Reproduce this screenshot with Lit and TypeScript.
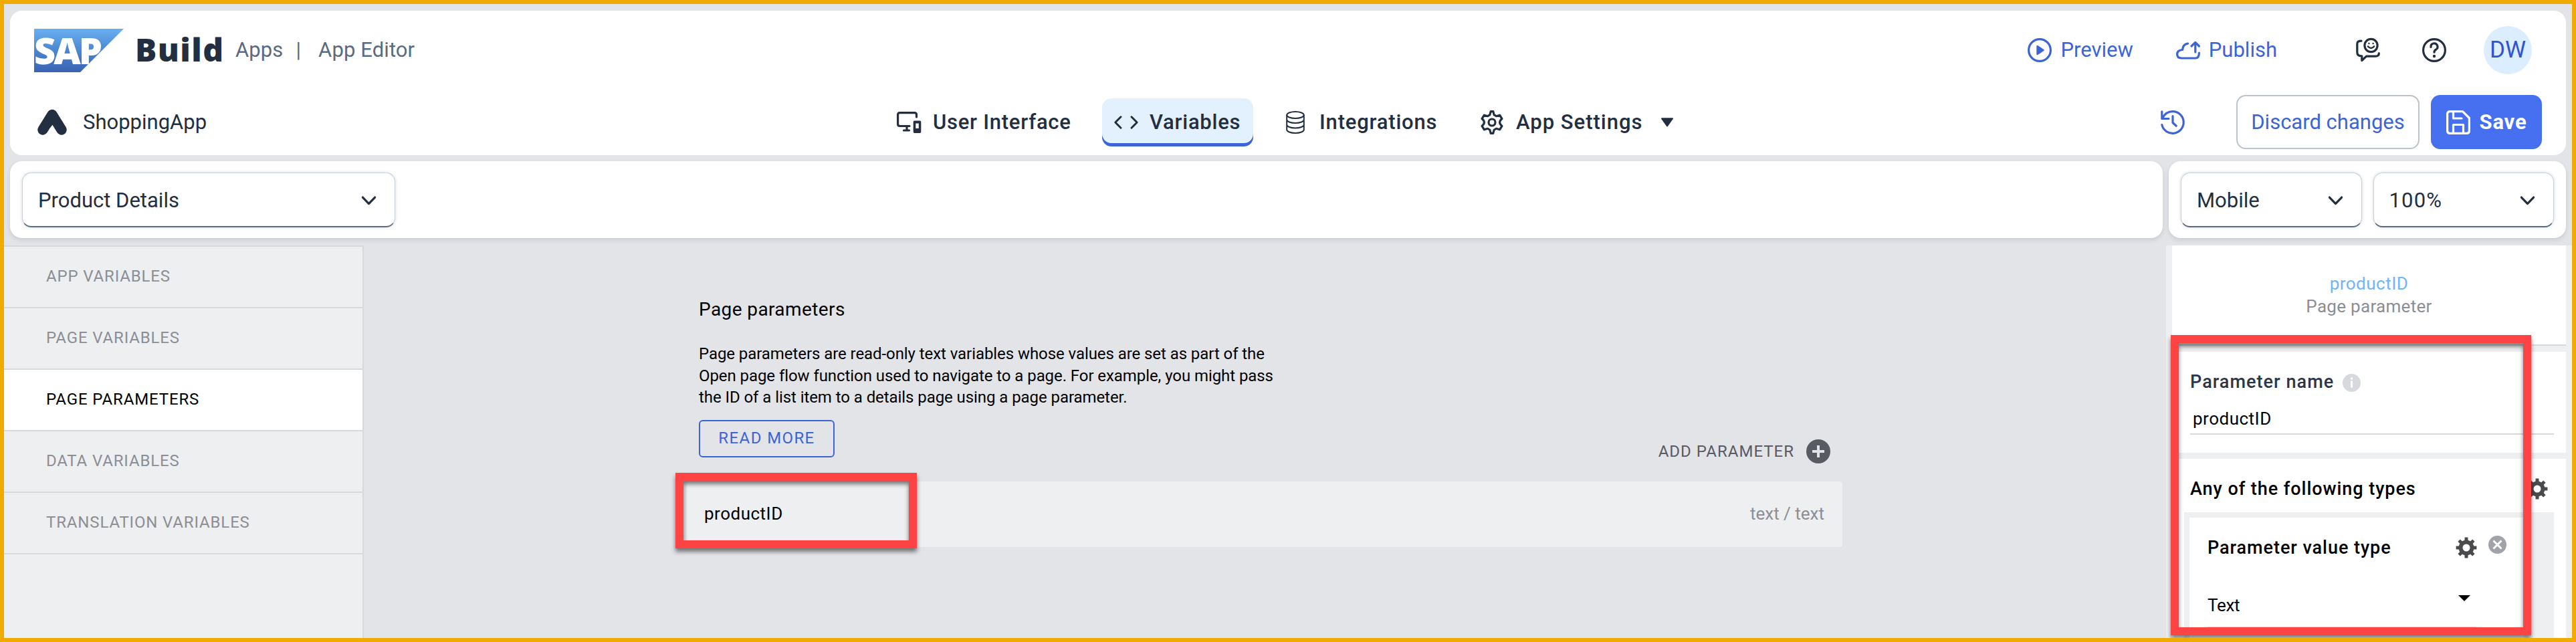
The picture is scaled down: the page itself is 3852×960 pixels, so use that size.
import { LitElement, html, css, svg, nothing } from "lit";
import { customElement, property } from "lit/decorators.js";
import { classMap } from "lit/directives/class-map.js";

const gearPath = (teeth: number, cx: number, cy: number, inner: number, outer: number) => {
  const step = (Math.PI * 2) / teeth;
  const at = (r: number, a: number) => `${(cx + r * Math.sin(a)).toFixed(2)} ${(cy - r * Math.cos(a)).toFixed(2)}`;
  const pts: string[] = [];
  for (let i = 0; i < teeth; i++) {
    const a = i * step;
    pts.push(at(inner, a - step * 0.28), at(outer, a - step * 0.2), at(outer, a + step * 0.2), at(inner, a + step * 0.28));
  }
  return `M${pts.join("L")}Z`;
};

const icons: Record<string, { box: string; body: unknown }> = {
  logo: {
    box: "0 0 134 65",
    body: svg`<defs><linearGradient id="g" x1="0" y1="0" x2="0" y2="1"><stop offset="0" stop-color="#69b0f1"/><stop offset=".5" stop-color="#4c86cf"/><stop offset="1" stop-color="#3a63b3"/></linearGradient></defs>
      <path d="M0 0H134L69 65H0Z" fill="url(#g)"/>
      <text x="0" y="52.500" textLength="99" lengthAdjust="spacingAndGlyphs" font-family="Noto Sans, sans-serif" font-weight="900" font-size="55" letter-spacing="-3" fill="#fff">SAP</text>`,
  },
  app: {
    box: "0 0 44 38",
    body: svg`<path d="M8 30 22 7.500 36 30" fill="none" stroke="currentColor" stroke-width="15.500" stroke-linecap="round" stroke-linejoin="round"/><path d="M19 12 27 12 25.500 19 19 27Z" fill="currentColor"/>`,
  },
  devices: {
    box: "0 0 36 32",
    body: svg`<g fill="none" stroke="currentColor" stroke-width="3.200" stroke-linecap="round" stroke-linejoin="round"><path d="M29.500 8V4.500Q29.500 1.600 26.500 1.600H4.600Q1.600 1.600 1.600 4.500V18.500Q1.600 21.500 4.600 21.500H19"/><path d="M15 22V28M10.500 28H18.500"/></g><path fill-rule="evenodd" d="M26.500 13.500h8a1.800 1.800 0 0 1 1.800 1.800v15a1.800 1.800 0 0 1-1.800 1.800h-8a1.800 1.800 0 0 1-1.800-1.800v-15a1.800 1.800 0 0 1 1.800-1.800ZM28.300 17.500v7.500h4.500v-7.500Z" fill="currentColor"/>`,
  },
  code: {
    box: "0 0 36 20",
    body: svg`<path d="M10 1.800 1.800 10 10 18.200M26 1.800 34.200 10 26 18.200" fill="none" stroke="currentColor" stroke-width="3" stroke-linecap="round" stroke-linejoin="round"/>`,
  },
  database: {
    box: "0 0 28 34",
    body: svg`<g fill="none" stroke="currentColor" stroke-width="2"><ellipse cx="14" cy="6" rx="12.800" ry="5"/><path d="M1.200 6V28C1.200 30.800 6.900 33 14 33S26.800 30.800 26.800 28V6M1.200 13C1.200 15.800 6.900 18 14 18S26.800 15.800 26.800 13M1.200 20.500C1.200 23.300 6.900 25.500 14 25.500S26.800 23.300 26.800 20.500"/></g>`,
  },
  settings: {
    box: "0 0 34 36",
    body: svg`<g fill="none" stroke="currentColor" stroke-width="3.200" stroke-linejoin="round"><path d="M15.200 1.700h3.600l1.400 5.200q1.600.7 3.200 1.800l5.200-1.500 3.400 5.400q-3.400 2.700-3.400 5.400t3.400 5.400l-3.400 5.400-5.200-1.500q-1.600 1.100-3.200 1.800l-1.400 5.200h-3.600l-1.400-5.200q-1.600-.7-3.200-1.800l-5.200 1.500-3.400-5.400q3.400-2.700 3.400-5.400t-3.400-5.400l3.400-5.400 5.200 1.500q1.600-1.100 3.200-1.800Z"/><circle cx="17" cy="18" r="5"/></g>`,
  },
  triangle: {
    box: "0 0 20 14",
    body: svg`<path d="M2 1.200H18L10 12.500Z" fill="currentColor" stroke="currentColor" stroke-width="2" stroke-linejoin="round"/>`,
  },
  play: {
    box: "0 0 36 36",
    body: svg`<circle cx="18" cy="18" r="16.400" fill="none" stroke="currentColor" stroke-width="3.200"/><path d="M14.500 12 23.500 18 14.500 24Z" fill="currentColor" stroke="currentColor" stroke-width="2.400" stroke-linejoin="round"/>`,
  },
  cloud: {
    box: "0 0 36 28",
    body: svg`<g fill="none" stroke="currentColor" stroke-width="3.200" stroke-linecap="round" stroke-linejoin="round"><path d="M17.500 4.200Q10.500 5 9.500 13.500Q1.600 14 1.600 20T8 26H29Q34.400 26 34.400 18"/><path d="M28.800 17V3M23 8 28.800 2.400 34.400 8"/></g>`,
  },
  feedback: {
    box: "0 0 36 36",
    body: svg`<g fill="none" stroke="currentColor" stroke-width="3.200" stroke-linecap="round" stroke-linejoin="round"><path d="M8 4.200Q1.800 4.200 1.800 8.500V21.500Q1.800 26.800 8.800 26.800V33.500L15.500 27.200H29.500Q34.300 27.200 34.300 22.500"/><circle cx="22.500" cy="11" r="9.600"/></g><path d="M18 12.500Q22.500 17.500 27 12.500" fill="none" stroke="currentColor" stroke-width="2.600" stroke-linecap="round"/><circle cx="19.400" cy="8" r="1.200" fill="currentColor"/><circle cx="25.600" cy="8" r="1.200" fill="currentColor"/>`,
  },
  help: {
    box: "0 0 36 36",
    body: svg`<g fill="none" stroke="currentColor" stroke-width="3.200" stroke-linecap="round"><circle cx="18" cy="18" r="16.400"/><path d="M13 13.500A5 5 0 1 1 20.800 17Q18 18.500 18 21.200"/></g><circle cx="18" cy="27" r="2.200" fill="currentColor"/>`,
  },
  history: {
    box: "0 0 36 36",
    body: svg`<g fill="none" stroke="currentColor" stroke-width="3.200" stroke-linecap="round" stroke-linejoin="round"><path d="M1.800 1.800V12.500H12M2.500 12Q7.500 1.600 18 1.600A16.400 16.400 0 1 1 1.800 21.500"/><path d="M18 8.500V18.500L23.200 23.200"/></g>`,
  },
  save: {
    box: "0 0 36 36",
    body: svg`<g fill="none" stroke="currentColor" stroke-width="3.200" stroke-linecap="round" stroke-linejoin="round"><path d="M1.600 5.600Q1.600 1.600 5.600 1.600H24.500L34.400 11.500V30.400Q34.400 34.400 30.400 34.400H5.600Q1.600 34.400 1.600 30.400Z"/><path d="M10.500 2.500V12H23M10.500 34V21.500H25.500V34"/></g>`,
  },
  chevron: {
    box: "0 0 24 15",
    body: svg`<path d="M2.200 2.200 12 12.500 21.800 2.200" fill="none" stroke="currentColor" stroke-width="3.400" stroke-linecap="round" stroke-linejoin="round"/>`,
  },
  plus: {
    box: "0 0 36 36",
    body: svg`<circle cx="18" cy="18" r="18" fill="currentColor"/><path d="M18 9V27M9 18H27" stroke="#e3e4e8" stroke-width="4"/>`,
  },
  info: {
    box: "0 0 27 27",
    body: svg`<circle cx="13.500" cy="13.500" r="13.500" fill="currentColor"/><path d="M13.500 10.500V20.500M13.500 5.500V8.500" stroke="#fff" stroke-width="3"/>`,
  },
  remove: {
    box: "0 0 27 27",
    body: svg`<circle cx="13.500" cy="13.500" r="13.500" fill="currentColor"/><path d="M7.500 7.500 19.500 19.500M19.500 7.500 7.500 19.500" stroke="#fff" stroke-width="3"/>`,
  },
  cog: {
    box: "0 0 32 32",
    body: svg`<path fill="currentColor" fill-rule="evenodd" d="${gearPath(8, 16, 16, 11.6, 15.6)}M16 10.500a5.500 5.500 0 1 0 0 11 5.500 5.500 0 0 0 0-11Z"/>`,
  },
  caret: { box: "0 0 18 9", body: svg`<path d="M0 0H18L9 9Z" fill="currentColor"/>` },
};

@customElement("ui-icon")
class UiIcon extends LitElement {
  @property() name = "";
  static styles = css`
    :host { display: block; flex: none; line-height: 0; }
    svg { display: block; width: 100%; height: 100%; overflow: visible; }
  `;
  render() {
    const icon = icons[this.name];
    return icon ? html`<svg viewBox=${icon.box}>${icon.body}</svg>` : nothing;
  }
}

@customElement("ui-select")
class UiSelect extends LitElement {
  @property() value = "";
  static styles = css`
    :host {
      display: flex; align-items: center; justify-content: space-between; box-sizing: border-box;
      height: 82px; padding: 2px 27px 0 23px; border-radius: 14px; background: #fff;
      border: 1px solid #c9d0d9; border-bottom: 2px solid #5b6b82;
      box-shadow: 0 0 4px rgba(91, 107, 130, 0.28); color: #232f40;
    }
    ui-icon { width: 23px; height: 14px; }
  `;
  render() {
    return html`<span>${this.value}</span><ui-icon name="chevron"></ui-icon>`;
  }
}

const tabs = [
  { label: "User Interface", icon: "devices", cls: "t-ui" },
  { label: "Variables", icon: "code", cls: "t-var" },
  { label: "Integrations", icon: "database", cls: "t-int" },
  { label: "App Settings", icon: "settings", cls: "t-set" },
];
const sections = ["App variables", "Page variables", "Page parameters", "Data variables", "Translation variables"];

@customElement("app-root")
class AppRoot extends LitElement {
  static styles = css`
    :host {
      display: block; position: relative; box-sizing: border-box; width: 3852px; height: 960px; overflow: hidden;
      border: 6px solid #f0ab00; background: #e3e4e8; color: #000;
      font-family: Roboto, "Liberation Sans", sans-serif; font-size: 31px; line-height: 40px; white-space: nowrap;
    }
    .header {
      display: flex; flex-direction: column; box-sizing: border-box; margin: 10px 9px 0; height: 216px;
      border-radius: 18px; background: #fff; color: #232f40;
    }
    .brand { display: flex; align-items: center; height: 118px; box-sizing: border-box; padding: 0 51px 0 36px; }
    .row { display: grid; grid-template-columns: 1326px auto 1fr; align-items: flex-start; height: 98px; }
    .logo { width: 134px; height: 65px; }
    .product { margin: -2px 0 0 17px; width: 150px; font: 900 48px/60px "Noto Sans", Roboto, sans-serif; letter-spacing: 1.4px; }
    .crumb { color: #5b6b82; letter-spacing: 0.1px; }
    .crumb.sep { margin: 0 26px 0 19px; }
    .spacer { flex: 1; }
    .link { display: flex; align-items: center; gap: 13px; color: #3d64d6; letter-spacing: 0; }
    .sq { width: 36px; height: 36px; }
    .cl { width: 36px; height: 28px; }
    .publish { margin: 0 118px 0 64px; }
    .help { margin: 0 56px 0 63px; }
    .avatar {
      width: 72px; height: 72px; border-radius: 50%; background: #dbeeff; color: #3054d3;
      font-size: 35px; line-height: 72px; text-align: center;
    }
    .appname { display: flex; align-items: center; height: 80px; padding: 9px 0 0 41px; gap: 24px; letter-spacing: 0; }
    .mark { width: 44px; height: 38px; }
    .tabs { display: flex; padding-top: 13px; font-weight: 500; letter-spacing: 0.75px; }
    .tab { display: flex; align-items: center; box-sizing: border-box; height: 72px; border-radius: 14px; }
    .t-ui { width: 307px; gap: 18px; }
    .t-var { width: 226px; gap: 17px; padding-left: 18px; background: #e3f1ff; overflow: hidden; box-shadow: inset 0 -5px #3d64d6; }
    .t-int { width: 340px; gap: 22px; padding-left: 49px; letter-spacing: 0.8px; }
    .t-set { gap: 19px; letter-spacing: 1px; }
    .i-devices { width: 36px; height: 32px; }
    .i-code { width: 36px; height: 20px; }
    .i-database { width: 28px; height: 34px; }
    .i-settings { width: 34px; height: 36px; }
    .tri { width: 20px; height: 14px; margin-left: 7px; }
    .actions { display: flex; justify-content: flex-end; align-items: center; height: 81px; padding: 8px 36px 0 0; }
    .history { margin-right: 77px; color: #3d64d6; }
    .btn { display: flex; align-items: center; justify-content: center; box-sizing: border-box; height: 81px; border-radius: 14px; }
    .discard { width: 274px; margin-right: 17px; border: 2px solid #bcc3ca; color: #3d64d6; }
    .savebtn { width: 166px; gap: 14px; background: #4670f0; color: #fff; font-weight: 700; letter-spacing: 0.8px; }
    .bars { display: grid; grid-template-columns: 3219px 594px; gap: 9px; margin: 9px 9px 0; }
    .bar {
      display: flex; gap: 17px; box-sizing: border-box; height: 115px; padding: 17px 18px; border-radius: 18px; background: #fff;
      box-shadow: 0 3px 6px rgba(60, 60, 60, 0.14);
    }
    .page { width: 558px; }
    .small { width: 271px; }
    .zoom { letter-spacing: 1.2px; }
    .body { display: grid; grid-template-columns: 538px 1fr 607px; height: 587px; margin-top: 11px; }
    .side { box-sizing: border-box; border-top: 2px solid #d8d9dc; border-right: 2px solid #d8d9dc; background: #eeeff1; }
    .item {
      box-sizing: border-box; height: 92px; padding-left: 63px; border-bottom: 2px solid #d8d9dc;
      color: #8c8e95; font-size: 24px; line-height: 89px; letter-spacing: 0.85px; text-transform: uppercase;
    }
    .item.on { background: #fff; color: #000; }
    .main { display: flex; flex-direction: column; padding-left: 477px; }
    .title { margin-top: 76px; padding-left: 24px; font-size: 28px; line-height: 40px; letter-spacing: 0.4px; }
    .desc { margin-top: 30px; padding-left: 24px; font-size: 24px; line-height: 32.5px; letter-spacing: -0.07px; }
    .tools { display: flex; flex: none; justify-content: space-between; align-items: flex-start; width: 1716px; height: 92px; margin-top: 17px; }
    .more {
      box-sizing: border-box; width: 203px; height: 56px; margin-left: 24px; border: 2px solid #3d64d6; border-radius: 6px;
      color: #3d64d6; font-size: 24px; line-height: 51px; text-align: center; letter-spacing: 1.4px;
    }
    .add { display: flex; align-items: center; gap: 18px; padding-top: 29px; color: #585b63; font-size: 24px; line-height: 36px; letter-spacing: 1px; }
    .param {
      display: flex; align-items: center; justify-content: space-between; box-sizing: border-box; width: 1728px; height: 98px;
      margin-left: 6px; padding: 0 27px 2px 26px; border-radius: 4px; background: #eeeff1; font-size: 26px; letter-spacing: 0.5px;
    }
    .kind { color: #8c8e95; letter-spacing: 0; }
    .panel { display: flex; flex-direction: column; box-sizing: border-box; overflow: hidden; padding: 0 9px; background: #eeeff1; font-size: 26px; }
    .card { flex: none; box-sizing: border-box; background: #fff; }
    .sum { height: 150px; padding-top: 40px; border-bottom: 2px solid #d8d9dc; text-align: center; line-height: 34px; color: #8c8e95; letter-spacing: 0.3px; }
    .sum .id { color: #6fb4ff; letter-spacing: 0.5px; }
    .name { height: 151px; margin-top: 9px; padding: 25px 18px 0 27px; }
    .label { display: flex; align-items: center; gap: 13px; height: 40px; color: #2b3648; font-size: 27px; font-weight: 500; letter-spacing: 1.05px; }
    .i { width: 27px; height: 27px; color: #d8d9dc; margin-top: 2px; }
    .input { height: 59px; box-sizing: border-box; padding: 15px 0 0 4px; border-bottom: 2px solid #d8d9dc; letter-spacing: 0.5px; }
    .types { height: 280px; margin-top: 9px; padding: 25px 18px 0; }
    .types .label { padding: 0 9px; color: #000; justify-content: space-between; letter-spacing: 0.95px; }
    .cog { width: 32px; height: 32px; color: #4b4b4d; }
    .nest { height: 220px; margin-top: 15px; padding: 8px 44px 0 8px; background: #eeeff1; }
    .value { height: 212px; padding: 25px 27px 0 27px; background: #fff; box-sizing: border-box; }
    .value .label { padding: 0; justify-content: flex-start; gap: 0; }
    .value .cog { margin-left: auto; }
    .x { width: 27px; height: 27px; margin: -9px 0 0 17px; color: #a2a3a9; }
    .pick { display: flex; align-items: center; justify-content: space-between; box-sizing: border-box; width: 402px; height: 100px; padding: 34px 9px 0 0; border-bottom: 2px solid #d8d9dc; letter-spacing: -0.3px; }
    .caret { width: 18px; height: 9px; margin-top: -22px; }
    .mark-box { position: absolute; box-sizing: border-box; border: 12px solid #fd4343; filter: drop-shadow(0 5px 3px rgba(0, 0, 0, 0.5)); }
    .m1 { left: 1004px; top: 701px; width: 361px; height: 113px; }
    .m2 { left: 3240px; top: 495px; width: 539px; height: 449px; }
  `;

  render() {
    return html`
      <header class="header">
        <div class="brand">
          <ui-icon class="logo" name="logo"></ui-icon>
          <span class="product">Build</span>
          <span class="crumb">Apps</span><span class="crumb sep">|</span><span class="crumb">App Editor</span>
          <span class="spacer"></span>
          <a class="link"><ui-icon class="sq" name="play"></ui-icon>Preview</a>
          <a class="link publish"><ui-icon class="cl" name="cloud"></ui-icon>Publish</a>
          <ui-icon class="sq" name="feedback"></ui-icon>
          <ui-icon class="sq help" name="help"></ui-icon>
          <span class="avatar">DW</span>
        </div>
        <div class="row">
          <div class="appname"><ui-icon class="mark" name="app"></ui-icon>ShoppingApp</div>
          <nav class="tabs">
            ${tabs.map(
              (t) => html`<div class="tab ${t.cls}">
                <ui-icon class="i-${t.icon}" name=${t.icon}></ui-icon><span>${t.label}</span>
                ${t.icon === "settings" ? html`<ui-icon class="tri" name="triangle"></ui-icon>` : nothing}
              </div>`,
            )}
          </nav>
          <div class="actions">
            <ui-icon class="sq history" name="history"></ui-icon>
            <div class="btn discard">Discard changes</div>
            <div class="btn savebtn"><ui-icon class="sq" name="save"></ui-icon>Save</div>
          </div>
        </div>
      </header>
      <div class="bars">
        <div class="bar"><ui-select class="page" value="Product Details"></ui-select></div>
        <div class="bar"><ui-select class="small" value="Mobile"></ui-select><ui-select class="small zoom" value="100%"></ui-select></div>
      </div>
      <div class="body">
        <aside class="side">
          ${sections.map((s) => html`<div class=${classMap({ item: true, on: s === "Page parameters" })}>${s}</div>`)}
        </aside>
        <main class="main">
          <div class="title">Page parameters</div>
          <div class="desc">
            Page parameters are read-only text variables whose values are set as part of the<br />Open page flow function
            used to navigate to a page. For example, you might pass<br />the ID of a list item to a details page using a page
            parameter.
          </div>
          <div class="tools">
            <div class="more">READ MORE</div>
            <div class="add">ADD PARAMETER<ui-icon class="sq" name="plus"></ui-icon></div>
          </div>
          <div class="param"><span>productID</span><span class="kind">text / text</span></div>
        </main>
        <aside class="panel">
          <div class="card sum"><div class="id">productID</div><div>Page parameter</div></div>
          <div class="card name">
            <div class="label">Parameter name<ui-icon class="i" name="info"></ui-icon></div>
            <div class="input">productID</div>
          </div>
          <div class="card types">
            <div class="label">Any of the following types<ui-icon class="cog" name="cog"></ui-icon></div>
            <div class="nest">
              <div class="value">
                <div class="label">Parameter value type<ui-icon class="cog" name="cog"></ui-icon><ui-icon class="x" name="remove"></ui-icon></div>
                <div class="pick">Text<ui-icon class="caret" name="caret"></ui-icon></div>
              </div>
            </div>
          </div>
        </aside>
      </div>
      <div class="mark-box m1"></div>
      <div class="mark-box m2"></div>
    `;
  }
}
